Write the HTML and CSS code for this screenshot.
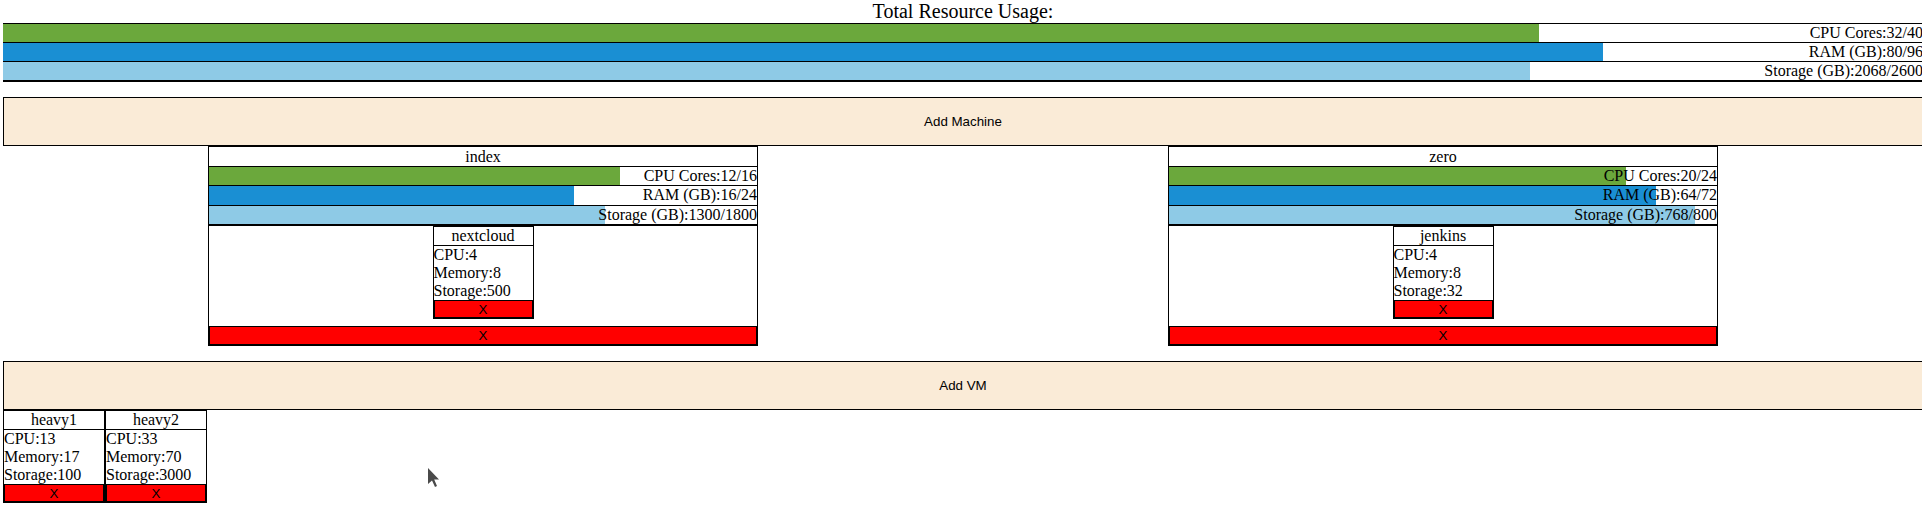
FILE: index.html
```html
<!DOCTYPE html>
<html lang="en">
<head>
<meta charset="utf-8">
<title>Resources</title>
<link rel="stylesheet" href="styles.css">
</head>
<body>
<div class="page">
  <div class="total">
    <div class="title">Total Resource Usage:</div>
    <div class="bars">
      <div class="bar cpu" style="--p:80%">CPU Cores:32/40</div>
      <div class="bar ram" style="--p:83.333%">RAM (GB):80/96</div>
      <div class="bar disk" style="--p:79.54%">Storage (GB):2068/2600</div>
    </div>
  </div>

  <button class="add">Add Machine</button>

  <div class="machines">
    <div class="cell">
      <div class="machine">
        <div class="mname">index</div>
        <div class="bars">
          <div class="bar cpu" style="--p:75%">CPU Cores:12/16</div>
          <div class="bar ram" style="--p:66.667%">RAM (GB):16/24</div>
          <div class="bar disk" style="--p:72.222%">Storage (GB):1300/1800</div>
        </div>
        <div class="vmlist">
          <div class="vm">
            <div class="vname">nextcloud</div>
            <div class="stat">CPU:4</div>
            <div class="stat">Memory:8</div>
            <div class="stat">Storage:500</div>
            <button class="del">X</button>
          </div>
        </div>
        <button class="del">X</button>
      </div>
    </div>
    <div class="cell">
      <div class="machine">
        <div class="mname">zero</div>
        <div class="bars">
          <div class="bar cpu" style="--p:83.333%">CPU Cores:20/24</div>
          <div class="bar ram" style="--p:88.889%">RAM (GB):64/72</div>
          <div class="bar disk" style="--p:96%">Storage (GB):768/800</div>
        </div>
        <div class="vmlist">
          <div class="vm">
            <div class="vname">jenkins</div>
            <div class="stat">CPU:4</div>
            <div class="stat">Memory:8</div>
            <div class="stat">Storage:32</div>
            <button class="del">X</button>
          </div>
        </div>
        <button class="del">X</button>
      </div>
    </div>
  </div>

  <button class="add">Add VM</button>

  <div class="pool">
    <div class="vm">
      <div class="vname">heavy1</div>
      <div class="stat">CPU:13</div>
      <div class="stat">Memory:17</div>
      <div class="stat">Storage:100</div>
      <button class="del">X</button>
    </div>
    <div class="vm">
      <div class="vname">heavy2</div>
      <div class="stat">CPU:33</div>
      <div class="stat">Memory:70</div>
      <div class="stat">Storage:3000</div>
      <button class="del">X</button>
    </div>
  </div>
</div>
<svg class="cursor" width="12" height="19" viewBox="0 0 12 19" aria-hidden="true">
  <polygon points="0,0 0,16 4,12.5 7,19 9,18 6.2,11.5 11,11.5" fill="#4a4a4a"/>
</svg>
</body>
</html>
```

FILE: styles.css
```css
html, body {
  margin: 0;
  padding: 0;
  background: #ffffff;
}

body {
  font-family: "Liberation Serif", "Times New Roman", serif;
  font-size: 16px;
  color: #000;
  overflow: hidden;
  position: relative;
  height: 516px;
}

.page {
  width: 1920px;
  margin-left: 3px;
}

.title {
  text-align: center;
  font-size: 20px;
  line-height: 23px;
}

.bars {
  border-top: 1px solid #000;
  border-bottom: 1px solid #000;
}

.bar {
  height: 18px;
  line-height: 18px;
  text-align: right;
  white-space: nowrap;
  border-bottom: 1px solid #000;
  background: linear-gradient(to right, var(--c) var(--p), #ffffff var(--p));
}

.machine .bar {
  height: 18.4px;
  line-height: 18.4px;
}

.cpu { --c: #6ba83c; }
.ram { --c: #1a8fd3; }
.disk { --c: #8ecae6; }

.add {
  display: block;
  box-sizing: border-box;
  width: 1920px;
  height: 49px;
  margin: 15px 0 0;
  padding: 0;
  border: 1px solid #000;
  background: #faebd7;
  font-family: "Liberation Sans", Arial, sans-serif;
  font-size: 13.33px;
  color: #000;
}

.machines {
  display: grid;
  grid-template-columns: 960px 960px;
}

.machine {
  box-sizing: border-box;
  width: 550px;
  margin: 0 auto;
  border: 1px solid #000;
}

.mname {
  text-align: center;
  line-height: 19px;
}

.vmlist {
  display: flex;
  justify-content: center;
  padding-bottom: 7px;
}

.vm {
  box-sizing: border-box;
  width: 101px;
  border: 1px solid #000;
  display: flex;
  flex-direction: column;
}

.vname {
  text-align: center;
  line-height: 18px;
  border-bottom: 1px solid #000;
}

.stat {
  line-height: 18px;
  white-space: nowrap;
}

.del {
  display: block;
  box-sizing: border-box;
  width: 100%;
  height: 18px;
  margin: 0;
  padding: 0;
  border: 1px solid #000;
  background: #ff0000;
  color: #000;
  font-family: "Liberation Sans", Arial, sans-serif;
  font-size: 13.33px;
  line-height: 15px;
}

.machine > .del {
  height: 19px;
}

.pool {
  display: flex;
}

.pool .vm {
  width: 102px;
}

.cursor {
  position: absolute;
  left: 428px;
  top: 468px;
}
```
